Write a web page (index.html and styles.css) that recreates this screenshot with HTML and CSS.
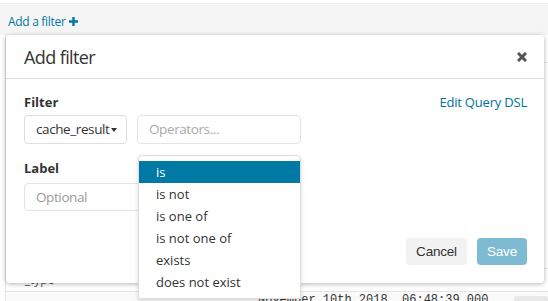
FILE: index.html
```html
<!DOCTYPE html>
<html lang="en">
<head>
    <meta charset="UTF-8">
    <title>Add filter</title>
    <link rel="stylesheet" href="styles.css">
</head>
<body>
    <div class="topbar">
        <a class="add-link">Add a filter
            <svg width="9" height="9" viewBox="0 0 9 9"><path d="M3.3 0h2.4v3.3H9v2.4H5.7V9H3.3V5.7H0V3.3h3.3z" fill="#0079a5"/></svg>
        </a>
    </div>
    <div class="doc-table">
        <div class="doc-row"></div>
        <div class="doc-row tall"></div>
        <div class="doc-row field"><span class="arrow">&#8249;</span> _type</div>
        <div class="doc-row date"><span class="stamp">November 10th 2018, 06:48:39.000</span><span class="tag"></span></div>
    </div>

    <div class="modal">
        <div class="modal-head">
            <span class="modal-title">Add filter</span>
            <svg class="close" width="10" height="10" viewBox="0 0 10 10"><path d="M1 1L9 9M9 1L1 9" stroke="#555" stroke-width="3"/></svg>
        </div>
        <div class="modal-body">
            <div class="label-row">
                <span class="label">Filter</span>
                <a class="dsl">Edit Query DSL</a>
            </div>
            <div class="field-row">
                <div class="select">cache_result<span class="caret"></span></div>
                <div class="input ops">Operators...</div>
            </div>
            <div class="label">Label</div>
            <div class="input optional">Optional</div>
        </div>
        <div class="modal-foot">
            <button class="btn cancel">Cancel</button>
            <button class="btn save">Save</button>
        </div>
    </div>

    <ul class="menu">
        <li class="active">is</li>
        <li>is not</li>
        <li>is one of</li>
        <li>is not one of</li>
        <li>exists</li>
        <li>does not exist</li>
    </ul>
</body>
</html>
```
FILE: styles.css
```css
body { margin: 0; font-family: "Open Sans", sans-serif; color: #333; background: #fff; }
.topbar { margin-top: 3px; height: 32px; border-top: 1px solid #ececec; background: #f5f5f5; box-sizing: border-box; padding: 5px 8px 0; }
.add-link { font-size: 12px; letter-spacing: -0.3px; color: #0079a5; }
.add-link svg { margin-left: 1px; }
.doc-table { border-left: 1px solid #e4e4e4; margin-left: 5px; }
.doc-row { height: 27px; border-bottom: 1px solid #e8e8e8; }
.doc-row.tall { height: 205px; }
.doc-row.field { height: 22px; font-size: 12px; padding-left: 4px; color: #555; line-height: 22px; border-bottom: 1px solid #e4e4e4; }
.arrow { margin-right: 8px; }
.doc-row.date { border: none; display: flex; align-items: flex-start; height: 17px; background: #fafafa; }
.stamp { font-family: "Liberation Mono", monospace; font-size: 12px; margin-left: 252px; line-height: 17px; color: #333; }
.tag { width: 34px; height: 12px; margin: 4px 0 0 auto; background: #e8e8e8; border-radius: 3px; }

.modal { position: absolute; left: 6px; top: 35px; width: 538px; height: 248px; background: #fff; border-radius: 4px; box-shadow: 0 1px 5px rgba(0,0,0,0.3); display: flex; flex-direction: column; }
.modal-head { height: 43px; border-bottom: 1px solid #ddd; display: flex; align-items: center; justify-content: space-between; padding: 0 17px 0 18px; }
.modal-title { font-size: 18px; letter-spacing: -0.6px; }
.modal-body { padding: 14px 17px 0 18px; flex: 1; }
.label-row { display: flex; justify-content: space-between; align-items: baseline; }
.label { font-size: 13px; font-weight: bold; display: block; }
.dsl { font-size: 13px; letter-spacing: -0.2px; color: #00729b; }
.field-row { display: flex; gap: 10px; margin: 4px 0 15px; }
.select { height: 29px; width: 103px; box-sizing: border-box; border: 1px solid #ddd; border-radius: 4px; font-size: 13.5px; letter-spacing: -0.4px; padding: 4px 0 0 11px; white-space: nowrap; }
.caret { display: inline-block; margin-left: 2px; vertical-align: middle; border-top: 4px solid #333; border-left: 3.5px solid transparent; border-right: 3.5px solid transparent; }
.input { height: 29px; box-sizing: border-box; border: 1px solid #e4e4e4; border-radius: 4px; font-size: 13.5px; letter-spacing: -0.4px; color: #aaa; padding: 4px 0 0 11px; white-space: nowrap; }
.ops { width: 164px; }
.optional { width: 270px; height: 28px; margin-top: 6px; color: #999; }
.modal-foot { display: flex; justify-content: flex-end; gap: 10px; padding: 0 17px 18px; }
.btn { height: 27px; border: none; border-radius: 4px; font-family: "Liberation Sans", Arial, sans-serif; font-size: 13.5px; letter-spacing: -0.2px; padding: 0; }
.cancel { background: #f2f2f2; color: #333; width: 61px; }
.save { background: #7fbad3; color: #fff; width: 50px; }

.menu { position: absolute; left: 138px; top: 155px; width: 163px; margin: 0; padding: 5px 0 5px; list-style: none; background: #fff; border: 1px solid #ddd; border-radius: 4px 4px 0 0; box-shadow: 0 2px 4px rgba(0,0,0,0.15); box-sizing: border-box; }
.menu li { height: 22px; line-height: 22px; font-size: 13px; padding-left: 17px; color: #333; }
.menu li.active { background: #0079a5; color: #fff; }
```
